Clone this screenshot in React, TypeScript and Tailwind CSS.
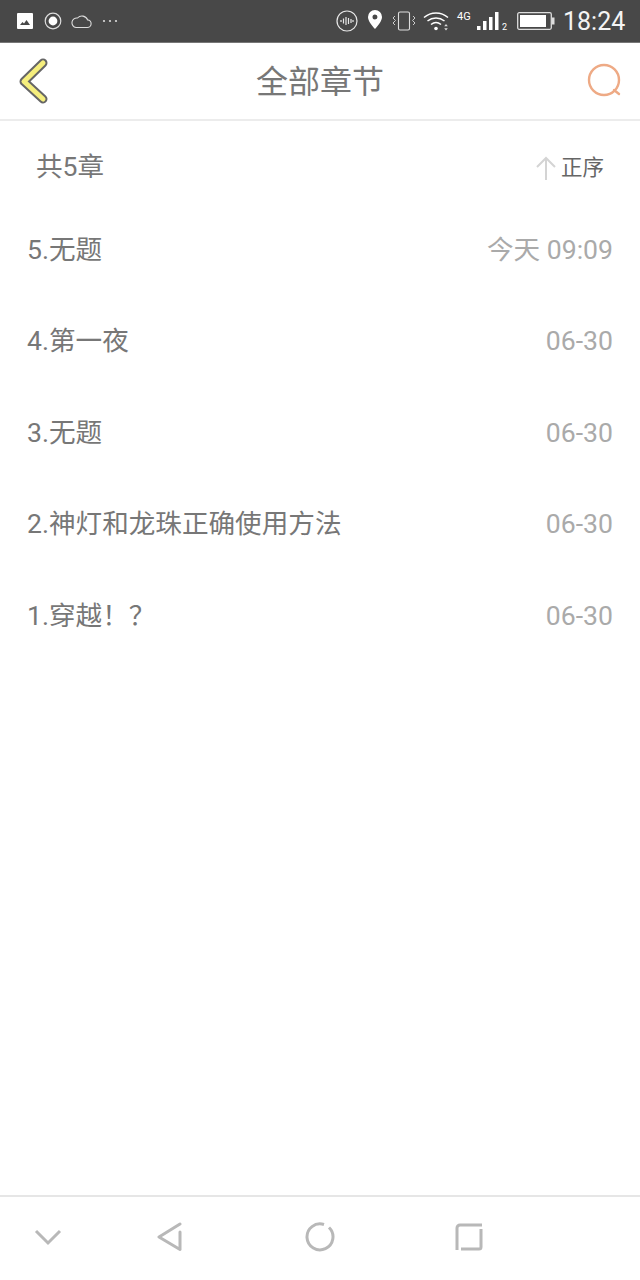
const FONT = "font-['Roboto','Noto_Sans_CJK_SC',sans-serif]";

const chapters = [
  { title: '5.无题', time: '今天 09:09' },
  { title: '4.第一夜', time: '06-30' },
  { title: '3.无题', time: '06-30' },
  { title: '2.神灯和龙珠正确使用方法', time: '06-30' },
  { title: '1.穿越！？', time: '06-30' },
];

function StatusBar() {
  return (
    <div className="h-[43px] shrink-0 bg-[#484848] border-b border-[#777] flex items-center text-white">
      {/* left notification icons */}
      <svg width="16" height="16" viewBox="0 0 16 16" className="ml-[17px]">
        <rect width="16" height="16" rx="1" fill="#fff" />
        <path d="M3 12l2.500-3 1.500 1.500L9.500 7l3.500 5z" fill="#484848" />
      </svg>
      <svg width="18" height="18" viewBox="0 0 18 18" className="ml-[11px]">
        <circle cx="9" cy="9" r="7.800" fill="none" stroke="#ddd" strokeWidth="1.200" />
        <circle cx="9" cy="9" r="4.400" fill="#fff" />
      </svg>
      <svg width="21" height="16" viewBox="0 0 21 16" className="ml-[9px]">
        <path d="M5 14.500h11a3.800 3.800 0 0 0 .6-7.600A6 6 0 0 0 6.500 5 4.800 4.800 0 0 0 5 14.500z" fill="none" stroke="#ddd" strokeWidth="1.100" />
      </svg>
      <svg width="16" height="4" viewBox="0 0 16 4" className="ml-[10px]">
        <circle cx="2" cy="2" r="1.100" fill="#ddd" />
        <circle cx="8" cy="2" r="1.100" fill="#ddd" />
        <circle cx="14" cy="2" r="1.100" fill="#ddd" />
      </svg>

      {/* right system icons */}
      <svg width="22" height="22" viewBox="0 0 22 22" className="ml-auto">
        <circle cx="11" cy="11" r="10" fill="none" stroke="#e8e8e8" strokeWidth="1.200" />
        <path d="M5 10v2M7.500 8.500v5M10 7v8M12.500 8v6M15 9v4M17 10v2" stroke="#e8e8e8" strokeWidth="1.200" />
      </svg>
      <svg width="14" height="19" viewBox="0 0 14 19" className="ml-[10px] -mt-[3px]">
        <path fillRule="evenodd" d="M7 0a7 7 0 0 1 7 7c0 4-4 8.500-7 12C4 15.500 0 11 0 7a7 7 0 0 1 7-7zm0 4.500a2.500 2.500 0 1 0 0 5 2.500 2.500 0 0 0 0-5z" fill="#fff" />
      </svg>
      <svg width="24" height="20" viewBox="0 0 24 20" className="ml-[10px]">
        <rect x="6.500" y="1" width="11" height="18" rx="1.500" fill="none" stroke="#ddd" strokeWidth="1.100" />
        <path d="M3 5l-2 2 2.500 2.500L1 12l2 2M21 5l2 2-2.500 2.500L23 12l-2 2" fill="none" stroke="#ccc" strokeWidth="1" />
      </svg>
      <svg width="27" height="20" viewBox="0 0 27 20" className="ml-[7px]">
        <path d="M1 6.500C8 .5 18 .5 25 6.500M4.500 10c5-4 12-4 17 0M8 13.500c3-2.500 7-2.500 10 0" fill="none" stroke="#fff" strokeWidth="1.500" />
        <circle cx="13" cy="17.500" r="1.800" fill="#fff" />
        <path d="M23 13l1.800 2.200h-3.600zM23 19.500l1.800-2.200h-3.600z" fill="#ddd" />
      </svg>
      <div className="ml-[7px] w-[15px] text-[11px] leading-none -mt-[9px] font-['Roboto',sans-serif]">4G</div>
      <svg width="22" height="20" viewBox="0 0 22 20" className="ml-[5px]">
        <rect x="0" y="15" width="3.500" height="4" fill="#fff" />
        <rect x="6" y="10" width="3.500" height="9" fill="#fff" />
        <rect x="12" y="6" width="3.500" height="13" fill="#fff" />
        <rect x="18" y="1" width="3.500" height="18" fill="#fff" />
      </svg>
      <div className="ml-[3px] w-[6px] text-[9px] leading-none mt-[12px] font-['Roboto',sans-serif]">2</div>
      <svg width="38" height="18" viewBox="0 0 38 18" className="ml-[9px]">
        <rect x="0.700" y="0.700" width="33.600" height="16.600" rx="1.500" fill="none" stroke="#ddd" strokeWidth="1.300" />
        <rect x="3" y="3" width="26" height="12" fill="#fff" />
        <rect x="35" y="5.500" width="2.500" height="7" fill="#ddd" />
      </svg>
      <div className="ml-[8px] mr-[15px] w-[62px] text-[25px] leading-none text-right font-['Roboto',sans-serif] text-[#f4f4f4]">18:24</div>
    </div>
  );
}

function Header() {
  return (
    <div className="h-[78px] shrink-0 bg-white border-b-2 border-[#ececec] flex items-center justify-between pl-[18px] pr-[17px]">
      <svg width="30" height="46" viewBox="0 0 30 46">
        <path d="M25 5L6 23.500 25 41" fill="none" stroke="#666" strokeWidth="9" strokeLinecap="round" strokeLinejoin="round" />
        <path d="M25 5L6 23.500 25 41" fill="none" stroke="#f5ee7d" strokeWidth="5" strokeLinecap="round" strokeLinejoin="round" />
      </svg>
      <div className="text-[32px] text-[#777] leading-none mt-[2px] ml-[5px]">全部章节</div>
      <svg width="36" height="34" viewBox="0 0 36 34" className="-mt-[2px]">
        <circle cx="17" cy="17" r="15" fill="none" stroke="#eeaa85" strokeWidth="2.400" />
        <path d="M27 27l5 4" fill="none" stroke="#eeaa85" strokeWidth="2.400" strokeLinecap="round" />
      </svg>
    </div>
  );
}

function BottomNav() {
  return (
    <div className="h-[85px] shrink-0 bg-white border-t-2 border-[#e6e6e6] flex items-center pb-[4px]">
      <svg width="28" height="18" viewBox="0 0 28 18" className="ml-[34px]">
        <path d="M2 3l12 12L26 3" fill="none" stroke="#b8b8b8" strokeWidth="3" />
      </svg>
      <svg width="28" height="30" viewBox="0 0 28 30" className="ml-[94px]">
        <path d="M24 2L3 15l21 12.500V10" fill="none" stroke="#b8b8b8" strokeWidth="3" strokeLinejoin="round" strokeLinecap="round" />
      </svg>
      <svg width="30" height="30" viewBox="0 0 30 30" className="ml-[121px]">
        <path d="M24 5.500A13 13 0 1 1 19 2.500" fill="none" stroke="#b8b8b8" strokeWidth="3" />
      </svg>
      <svg width="28" height="28" viewBox="0 0 28 28" className="ml-[120px]">
        <path d="M27 2H5a3 3 0 0 0-3 3v22M6 26h18a2 2 0 0 0 2-2V6" fill="none" stroke="#b8b8b8" strokeWidth="3" />
      </svg>
    </div>
  );
}

export default function App() {
  return (
    <div className={`w-[640px] h-[1280px] bg-white flex flex-col overflow-hidden ${FONT}`}>
      <StatusBar />
      <Header />

      {/* chapter count and sort order */}
      <div className="h-[83px] shrink-0 pt-[10px] pl-[36px] pr-[36px] flex items-center justify-between">
        <div className="text-[26.600px] text-[#777] leading-none">共5章</div>
        <div className="flex items-center">
          <svg width="20" height="24" viewBox="0 0 20 24">
            <path d="M10 24V2M1 11l9-9 9 9" fill="none" stroke="#d4d4d4" strokeWidth="2" />
          </svg>
          <span className="ml-[5px] text-[21.500px] text-[#666] leading-none">正序</span>
        </div>
      </div>

      {/* chapter list */}
      {chapters.map((c) => (
        <div key={c.title} className="h-[91.600px] shrink-0 pl-[27px] pr-[27px] flex items-center justify-between">
          <div className="text-[26.600px] text-[#777] leading-none">{c.title}</div>
          <div className="text-[26.600px] text-[#aaa] leading-none">{c.time}</div>
        </div>
      ))}

      <div className="flex-1" />
      <BottomNav />
    </div>
  );
}
